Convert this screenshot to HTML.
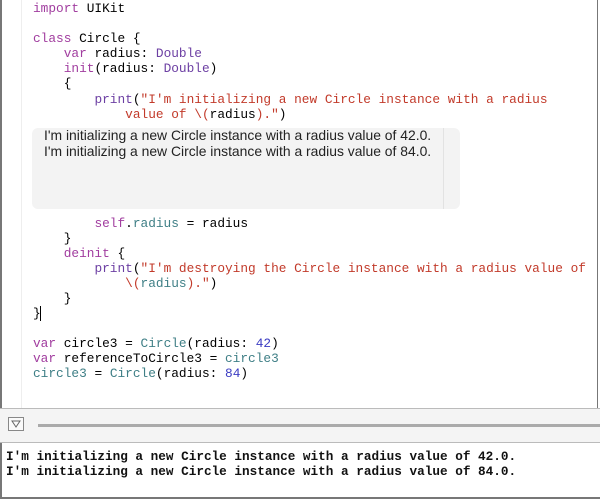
<!DOCTYPE html><html><head><style>
body{margin:0;width:600px;height:499px;overflow:hidden;background:#fff;position:relative;font-family:"Liberation Mono",monospace}
.l{position:absolute;left:33px;font-size:12.8px;line-height:15px;white-space:pre;color:#000}
.k{color:#a13d9f}.t{color:#6c3fa3}.s{color:#c23a2a}.v{color:#3f7f86}.n{color:#3a3bc2}
</style></head><body>
<div style="position:absolute;left:0;top:0;width:2px;height:499px;background:#777"></div>
<div style="position:absolute;right:2px;top:0;width:1px;height:408px;background:#777"></div>
<div style="position:absolute;left:21px;top:0;width:1px;height:408px;background:#eee"></div>
<div class="l" style="top:1px"><span class="k">import</span> UIKit</div>
<div class="l" style="top:31px"><span class="k">class</span> Circle {</div>
<div class="l" style="top:46px">    <span class="k">var</span> radius: <span class="t">Double</span></div>
<div class="l" style="top:61px">    <span class="k">init</span>(radius: <span class="t">Double</span>)</div>
<div class="l" style="top:76px">    {</div>
<div class="l" style="top:92px">        <span class="t">print</span>(<span class="s">"I'm initializing a new Circle instance with a radius</span></div>
<div class="l" style="top:107px"><span class="s">            value of \(</span>radius<span class="s">)."</span>)</div>
<div style="position:absolute;left:32px;top:128px;width:428px;height:81px;background:#f3f3f3;border-radius:6px"></div>
<div style="position:absolute;left:443px;top:128px;width:1px;height:81px;background:#e2e2e2"></div>
<div style="position:absolute;left:44px;top:128px;font-family:'Liberation Sans',sans-serif;font-size:13.9px;line-height:15.5px;color:#222;white-space:nowrap">I'm initializing a new Circle instance with a radius value of 42.0.<br>I'm initializing a new Circle instance with a radius value of 84.0.</div>
<div class="l" style="top:216px">        <span class="k">self</span>.<span class="v">radius</span> = radius</div>
<div class="l" style="top:231px">    }</div>
<div class="l" style="top:246px">    <span class="k">deinit</span> {</div>
<div class="l" style="top:261px">        <span class="t">print</span>(<span class="s">"I'm destroying the Circle instance with a radius value of</span></div>
<div class="l" style="top:276px"><span class="s">            \(</span><span class="v">radius</span><span class="s">)."</span>)</div>
<div class="l" style="top:291px">    }</div>
<div class="l" style="top:306px">}<span style="border-left:1px solid #000;margin-left:-1px"></span></div>
<div class="l" style="top:336px"><span class="k">var</span> circle3 = <span class="v">Circle</span>(radius: <span class="n">42</span>)</div>
<div class="l" style="top:351px"><span class="k">var</span> referenceToCircle3 = <span class="v">circle3</span></div>
<div class="l" style="top:366px"><span class="v">circle3</span> = <span class="v">Circle</span>(radius: <span class="n">84</span>)</div>
<div style="position:absolute;left:0;top:408px;width:600px;height:35px;background:#f4f4f4;border-top:1px solid #bbb;border-bottom:1px solid #bbb;box-sizing:border-box"></div>
<div style="position:absolute;left:8px;top:417px;width:16px;height:14px;border:1px solid #888;background:#fafafa;box-sizing:border-box"></div>
<svg style="position:absolute;left:11px;top:420px" width="10" height="8"><path d="M1 1H9L5 7Z" fill="none" stroke="#666"/></svg>
<div style="position:absolute;left:38px;top:424px;width:562px;height:3px;background:#aaa"></div>
<div style="position:absolute;left:6px;top:449px;font-size:12.7px;font-weight:bold;line-height:15px;white-space:pre;color:#111">I'm initializing a new Circle instance with a radius value of 42.0.
I'm initializing a new Circle instance with a radius value of 84.0.</div>
<div style="position:absolute;left:0;bottom:0;width:600px;height:2px;background:#777"></div>
</body></html>
